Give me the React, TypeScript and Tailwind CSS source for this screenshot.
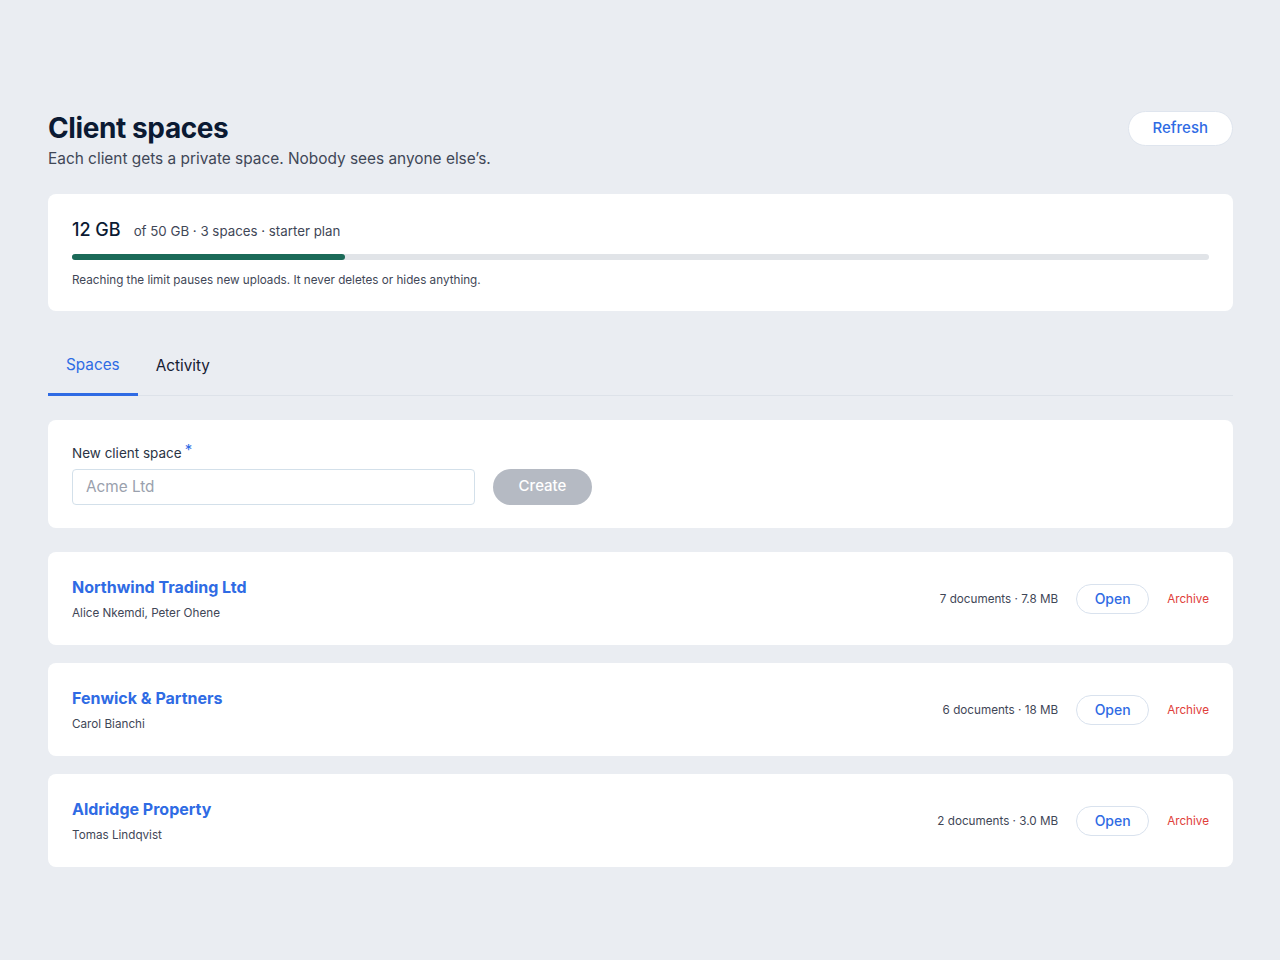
const spaces = [
  { name: "Northwind Trading Ltd", members: "Alice Nkemdi, Peter Ohene", meta: "7 documents · 7.8 MB" },
  { name: "Fenwick & Partners", members: "Carol Bianchi", meta: "6 documents · 18 MB" },
  { name: "Aldridge Property", members: "Tomas Lindqvist", meta: "2 documents · 3.0 MB" },
];

export default function App() {
  return (
    <div
      className="min-h-[960px] w-full bg-[#eaedf2] pl-12 pr-[47px] pt-[111px] text-[#162d3d]"
      style={{ fontFamily: "Inter, 'Noto Sans', sans-serif" }}
    >
      {/* header */}
      <div className="flex items-start justify-between">
        <div>
          <h1 className="text-[28px] font-bold leading-[34px] tracking-[-0.4px] text-[#0b1a33]">Client spaces</h1>
          <p className="mt-[3px] text-[15.4px] leading-[22px] text-[#3f4757]">
            Each client gets a private space. Nobody sees anyone else’s.
          </p>
        </div>
        <button className="h-[35px] rounded-full border border-[#dfe5ee] bg-white px-[24px] text-[15px] font-medium text-[#2f6be4]">
          Refresh
        </button>
      </div>

      {/* storage usage */}
      <div className="mt-[24px] rounded-lg bg-white px-6 pb-[22px] pt-[25px]">
        <div className="flex items-baseline gap-[13px]">
          <span className="text-[18px] font-medium leading-[22px] text-[#0b1a33]">12 GB</span>
          <span className="text-[13.3px] text-[#3f4757]">of 50 GB · 3 spaces · starter plan</span>
        </div>
        <div className="mt-[12px] h-[6px] w-full rounded-full bg-[#e1e4e8]">
          <div className="h-full rounded-full bg-[#1b6a58]" style={{ width: "24%" }} />
        </div>
        <p className="mt-[12px] text-[11.7px] text-[#3f4757]">
          Reaching the limit pauses new uploads. It never deletes or hides anything.
        </p>
      </div>

      {/* tabs */}
      <div className="mt-[29px] flex border-b border-[#dde2e9]">
        <button className="-mb-px border-b-[3px] border-[#2f6be4] px-[18px] pb-[16px] pt-[14px] text-[15.3px] text-[#2f6be4]">
          Spaces
        </button>
        <button className="px-[18px] pb-[16px] pt-[14px] text-[15.3px] text-[#162033]">Activity</button>
      </div>

      {/* new space form */}
      <div className="mt-[24px] rounded-lg bg-white px-6 pb-[23px] pt-[23px]">
        <label className="flex items-start text-[13.5px] text-[#2b3445]">
          New client space
          <span className="ml-[3px] -mt-[4px] text-[15px] text-[#2f6be4]">*</span>
        </label>
        <div className="mt-[5px] flex items-center gap-[18px]">
          <input
            placeholder="Acme Ltd"
            className="h-[36px] w-[403px] rounded-[4px] border border-[#d3e0ea] px-[13px] text-[15.3px] placeholder:text-[#9aa1ad] outline-none"
          />
          <button className="h-[36px] w-[99px] rounded-full bg-[#b5bac3] text-[15px] font-medium text-white">
            Create
          </button>
        </div>
      </div>

      {/* spaces list */}
      <div className="mt-[24px] flex flex-col gap-[18px]">
        {spaces.map((s) => (
          <div key={s.name} className="flex h-[93px] items-center justify-between rounded-lg bg-white px-6 pt-[1px]">
            <div className="pt-[3px]">
              <div className="text-[16px] font-bold leading-[20px] text-[#2f6be4]">{s.name}</div>
              <div className="mt-[8px] text-[11.7px] text-[#3f4757]">{s.members}</div>
            </div>
            <div className="flex items-center">
              <span className="pt-[2px] text-[11.7px] text-[#3f4757]">{s.meta}</span>
              <button className="ml-[18px] h-[30px] w-[73px] rounded-full border border-[#d9e2ee] bg-white text-[14px] font-medium text-[#2f6be4]">
                Open
              </button>
              <button className="ml-[18px] pt-[2px] text-[11.7px] text-[#e0403a]">Archive</button>
            </div>
          </div>
        ))}
      </div>
    </div>
  );
}
